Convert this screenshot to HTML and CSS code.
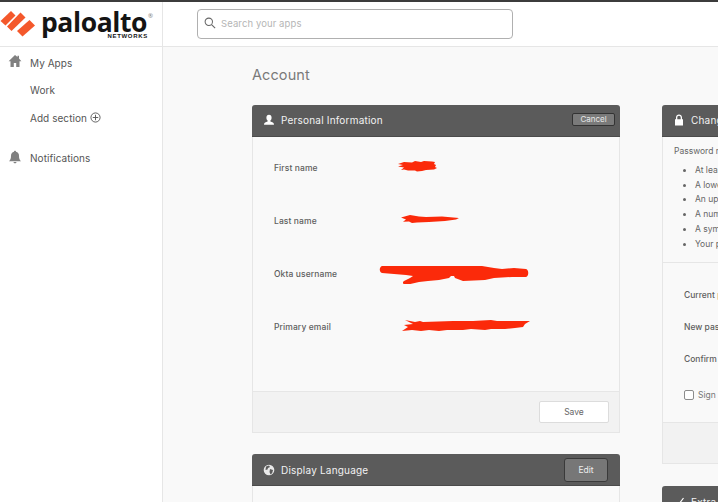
FILE: index.html
```html
<!DOCTYPE html>
<html lang="en">
<head>
<meta charset="utf-8">
<title>Account</title>
<link rel="stylesheet" href="styles.css">
</head>
<body>
<div class="page">
  <header class="topbar">
    <div class="brand">
      <svg class="mark" viewBox="0 0 36 32" width="36" height="32"><g fill="#f4582b"><path d="M0.500 15 11 5l4.500 4.500-10 10z"/><path d="M7 20.500 20.500 6.500l5 5L11.500 25z"/><path d="M17 25 29.500 14 35 19.500 22.500 30.500z"/></g></svg>
      <div class="wordmark">
        <span class="paloalto">paloalto<sup class="reg">®</sup></span>
        <span class="networks">NETWORKS</span>
      </div>
    </div>
    <div class="searchwrap">
      <div class="search">
        <svg viewBox="0 0 14 14" width="12" height="12"><circle cx="5.600" cy="5.600" r="4.300" fill="none" stroke="#666" stroke-width="1.200"/><path d="M8.800 8.800 13 13" stroke="#666" stroke-width="1.300"/></svg>
        <span>Search your apps</span>
      </div>
    </div>
  </header>
  <div class="body">
    <nav class="sidebar">
      <div class="navitem first">
        <svg class="navicon" viewBox="0 0 14 14" width="14" height="14"><path fill="#808080" d="M7 1 0.600 7.200H2.500V13h3.300V9h2.400v4h3.300V7.200h1.900L11 4.600V1.800H9.500v1.300z"/></svg>
        <span>My Apps</span>
      </div>
      <div class="navitem"><span class="noicon"></span><span>Work</span></div>
      <div class="navitem"><span class="noicon"></span><span>Add section</span>
        <svg class="plus" viewBox="0 0 12 12" width="11" height="11"><circle cx="6" cy="6" r="5" fill="none" stroke="#555" stroke-width="1"/><path d="M6 3v6M3 6h6" stroke="#555" stroke-width="1"/></svg>
      </div>
      <div class="navitem notif">
        <svg class="navicon" viewBox="0 0 14 14" width="14" height="14"><path fill="#808080" d="M7 .8c.6 0 1 .4 1 1 2 .5 3 2 3 4 0 3 .6 4 2 5.400H1C2.400 9.800 3 8.800 3 5.800c0-2 1-3.500 3-4 0-.6.400-1 1-1zM5.500 12h3c0 .8-.7 1.300-1.500 1.300S5.500 12.800 5.500 12z"/></svg>
        <span>Notifications</span>
      </div>
    </nav>
    <main class="main">
      <h1 class="title">Account</h1>
      <div class="columns">
        <div class="col-left">
          <section class="card">
            <div class="card-head lifted">
              <svg class="head-icon" viewBox="0 0 12 12" width="12" height="12"><path fill="#fff" d="M6 .8c1.700 0 2.600 1.200 2.600 2.900 0 1.200-.5 2.300-1.200 2.800v1c1.800.6 3.600 1 3.600 3.200H1c0-2.200 1.800-2.600 3.600-3.200v-1C3.900 6 3.400 4.900 3.400 3.700 3.400 2 4.300.8 6 .8z"/></svg>
              <span class="head-title">Personal Information</span>
              <button class="btn-cancel" type="button">Cancel</button>
            </div>
            <div class="fields">
              <div class="field">
                <span class="label">First name</span>
                <svg class="scribble s1" viewBox="0 0 39 11" width="39" height="11"><path fill="#fb2a0a" d="M0 3 6 1l8 .5L17 0l6 1 3-1 8 .5 3 .5-1 2 2 1-1 2 2 1-3 1.500-8 .5-4 1-5 .5-2-1-7 0-4-1-3 .5 3-2.500-6-1 5-1.500z"/></svg>
              </div>
              <div class="field">
                <span class="label">Last name</span>
                <svg class="scribble s2" viewBox="0 0 58 9" width="58" height="9"><path fill="#fb2a0a" d="M0 2.500 9 0l9 1.500 7 .5 16-.5 17 1.500-3 1.500-11 1.500-16 1-12 .5-5 .5-3-1.500-6 .2 3-2.200z"/></svg>
              </div>
              <div class="field">
                <span class="label">Okta username</span>
                <svg class="scribble s3" viewBox="0 0 150 18" width="150" height="18"><path fill="#fb2a0a" d="M3 0h100l12 2 8 1 12-1 12 1c3 1 3 7 0 8l-14 0-18 1-9 2-22 1-8-3-1-2-3 0-2 2-10 2-11 1-9 1-13 3c-3 0-4-3-2-4l6-3 3-2-7-1-24-2C0 6 0 1 3 0z"/></svg>
              </div>
              <div class="field">
                <span class="label">Primary email</span>
                <svg class="scribble s4" viewBox="0 0 130 12" width="130" height="12"><path fill="#fb2a0a" d="M5 0l10 2 5-1 3 1 30-1 20 0 18-1 6 1 12 0 21 0-5 3-2 3-8 1-10 1-14 0-6 1-14-1-8 1-16 0-8 1-10-1-8 1-9-1-10 1 6-4-4-2 9-1z"/></svg>
              </div>
            </div>
            <div class="card-foot">
              <button class="btn-save" type="button">Save</button>
            </div>
          </section>
          <section class="card lang">
            <div class="card-head wide-right">
              <svg class="head-icon" viewBox="0 0 12 12" width="12" height="12"><circle cx="6" cy="6" r="5.300" fill="#e9e9e9"/><path fill="#5b5b5b" d="M3 2.500 6 1.500l1 1.500-2 1-.5 1.500-2 .5zM7 5l3 1-.8 3L7.500 10.500 6.500 8z"/></svg>
              <span class="head-title">Display Language</span>
              <button class="btn-edit" type="button">Edit</button>
            </div>
            <div class="lang-body"></div>
          </section>
        </div>
        <div class="col-right">
          <section class="card pw">
            <div class="card-head lifted">
              <svg class="head-icon" viewBox="0 0 12 12" width="12" height="12"><path fill="#fff" d="M2 5.200h1V3.500C3 1.800 4.300.6 6 .6s3 1.200 3 2.900v1.700h1v6.300H2zM4.300 5.200h3.400V3.500C7.700 2.500 7 1.800 6 1.800s-1.700.7-1.700 1.700z"/></svg>
              <span class="head-title">Change Password</span>
            </div>
            <div class="rules">
              <p class="rules-intro">Password requirements:</p>
              <ul>
                <li>At least 8 characters</li>
                <li>A lowercase letter</li>
                <li>An uppercase letter</li>
                <li>A number</li>
                <li>A symbol</li>
                <li>Your password cannot be</li>
              </ul>
            </div>
            <div class="pw-form">
              <div class="pw-label">Current password</div>
              <div class="pw-label">New password</div>
              <div class="pw-label">Confirm password</div>
              <label class="signout"><span class="check"></span><span>Sign me out</span></label>
            </div>
            <div class="pw-foot"></div>
          </section>
          <section class="card extra">
            <div class="card-head">
              <svg class="head-icon" viewBox="0 0 12 12" width="12" height="12"><path fill="none" stroke="#fff" stroke-width="1.200" d="M1.500 7 4.500 10 10.500 2"/></svg>
              <span class="head-title">Extra Verification</span>
            </div>
          </section>
        </div>
      </div>
    </main>
  </div>
</div>
</body>
</html>
```

FILE: styles.css
```css
* { box-sizing: border-box; }
html, body { margin: 0; padding: 0; }
body {
  width: 718px;
  height: 502px;
  overflow: hidden;
  font-family: Inter, "Liberation Sans", sans-serif;
  color: #5a5a5a;
  background: #fff;
}
.page { display: flex; flex-direction: column; height: 502px; overflow: hidden; border-top: 2px solid #3c3c3c; }
.topbar { display: flex; height: 45px; flex: none; border-bottom: 1px solid #e6e6e6; background: #fff; }
.brand { width: 163px; flex: none; border-right: 1px solid #e6e6e6; display: flex; align-items: flex-start; padding: 4px 0 0 0; gap: 5px; }
.mark { flex: none; }
.wordmark { display: flex; flex-direction: column; width: 115px; margin-top: 5px; }
.paloalto { font-family: "Open Sans", "Liberation Sans", sans-serif; font-weight: 700; font-size: 26.500px; line-height: 22px; letter-spacing: -0.400px; color: #141414; white-space: nowrap; }
.reg { font-size: 6px; font-weight: 400; color: #777; vertical-align: 14px; line-height: 0; letter-spacing: 0; margin-left: 1px; }
.networks { font-family: "Liberation Sans", sans-serif; font-weight: 700; font-size: 6px; line-height: 6px; letter-spacing: .7px; color: #141414; text-align: right; padding-right: 8px; }
.searchwrap { flex: 1; padding: 7px 0 0 34px; }
.search { width: 316px; height: 30px; border: 1px solid #b0b0b0; border-radius: 4px; display: flex; align-items: center; gap: 5px; padding: 0 0 2px 6px; font-size: 9.500px; letter-spacing: .1px; color: #b5b5b5; background: #fff; }
.body { display: flex; flex: 1; min-height: 0; }
.sidebar { width: 163px; flex: none; border-right: 1px solid #e6e6e6; background: #fff; padding-top: 2px; }
.navitem { display: flex; align-items: center; height: 27.500px; font-size: 10px; color: #555; letter-spacing: .05px; padding-left: 8px; }
.navicon { flex: none; margin-right: 8px; margin-top: -3px; }
.noicon { width: 14px; margin-right: 8px; flex: none; }
.plus { margin-left: 3px; }
.notif { margin-top: 13px; }
.main { flex: 1; min-width: 0; background: #f9f9f9; padding: 0 0 0 89px; overflow: hidden; }
.title { margin: 17px 0 19px; font-size: 14.500px; line-height: 22px; font-weight: 400; color: #7a7a7a; letter-spacing: .1px; }
.columns { display: flex; gap: 42px; width: 800px; align-items: flex-start; }
.col-left { width: 368px; flex: none; }
.col-right { width: 340px; flex: none; }
.card { border: 1px solid #e6e6e6; border-top: none; border-radius: 3px 3px 0 0; background: #f9f9f9; }
.card-head { display: flex; align-items: center; height: 32px; margin: 0 -1px; padding: 0 5px 0 11px; background: #5b5b5b; border-radius: 3px 3px 0 0; border-bottom: 1px solid #4b4b4b; color: #fff; }
.lifted { padding-bottom: 2px; }
.wide-right { padding-right: 12px; }
.head-icon { flex: none; margin-right: 6px; }
.head-title { font-size: 10px; letter-spacing: .2px; flex: 1; color: #f2f2f2; white-space: nowrap; }
.btn-cancel { width: 43px; height: 13px; padding: 0; font: inherit; font-size: 8px; line-height: 11px; color: #e8e8e8; background: #7a7a7a; border: 1px solid #333; border-radius: 2px; }
.btn-edit { width: 44px; height: 24px; padding: 0; font: inherit; font-size: 8.500px; color: #eee; background: #777; border: 1px solid #3a3a3a; border-radius: 3px; }
.fields { height: 254px; padding-top: 4px; }
.field { display: flex; align-items: center; height: 53px; padding-left: 21px; }
.label { width: 126px; flex: none; font-size: 8.500px; font-weight: 500; color: #5e5e5e; letter-spacing: .1px; }
.scribble { flex: none; }
.s1 { margin-left: -2px; margin-top: -3px; }
.s2 { margin-left: 1px; margin-top: -2px; }
.s3 { margin-left: -21px; margin-top: 3px; }
.s4 { margin-left: 0; margin-top: -2px; }
.card-foot { display: flex; justify-content: flex-end; align-items: center; height: 41px; padding-right: 10px; background: #f2f2f2; border-top: 1px solid #e6e6e6; }
.btn-save { width: 70px; height: 22px; padding: 0; font: inherit; font-size: 8.500px; color: #666; background: #fff; border: 1px solid #dcdcdc; border-radius: 2px; }
.lang { margin-top: 21px; }
.lang-body { height: 60px; }
.rules { padding: 8px 0 0 11px; height: 126px; border-bottom: 1px solid #e6e6e6; font-size: 8.500px; color: #666; white-space: nowrap; }
.rules-intro { margin: 0; line-height: 12px; }
.rules ul { margin: 6px 0 0; padding: 0 0 0 21px; list-style: disc; }
.rules li { line-height: 14.700px; }
.pw-form { height: 159px; padding: 26px 0 0 21px; }
.pw-label { font-size: 8.500px; font-weight: 500; color: #5e5e5e; height: 32px; line-height: 13px; white-space: nowrap; }
.signout { display: flex; align-items: center; gap: 4px; margin-top: 5px; font-size: 8.500px; color: #777; white-space: nowrap; }
.check { width: 10px; height: 10px; border: 1px solid #8c8c8c; border-radius: 2px; background: #fff; flex: none; }
.pw-foot { height: 41px; background: #f2f2f2; border-top: 1px solid #e6e6e6; }
.extra { margin-top: 22px; }
```
